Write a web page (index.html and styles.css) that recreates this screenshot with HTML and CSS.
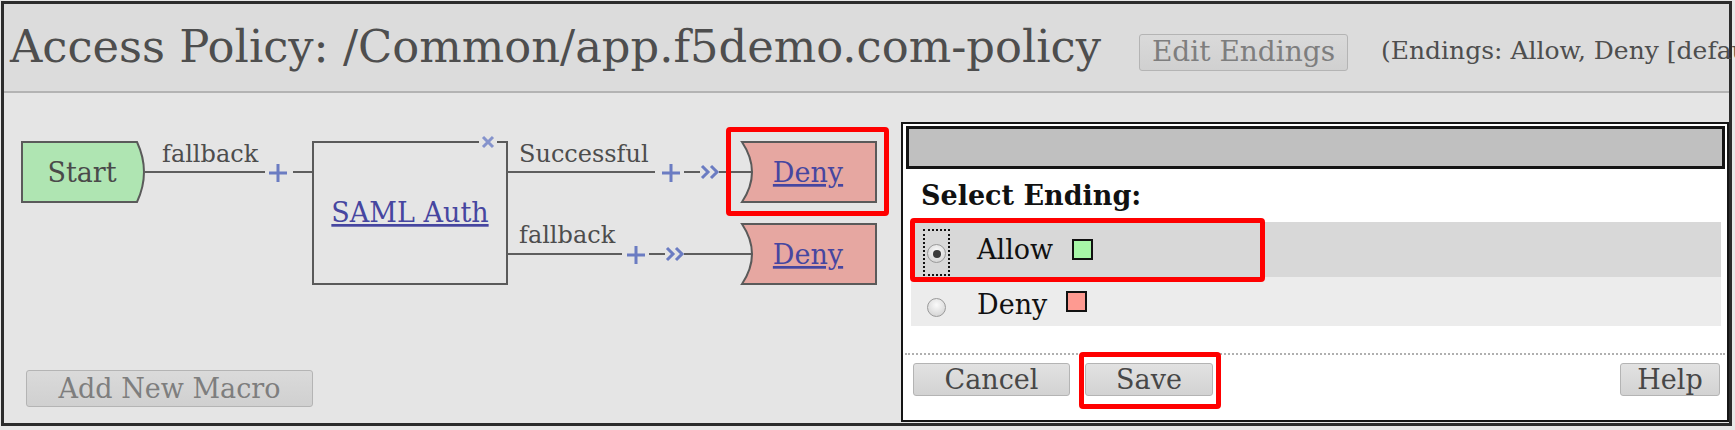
FILE: index.html
```html
<!DOCTYPE html>
<html>
<head>
<meta charset="utf-8">
<title>Access Policy</title>
<link rel="stylesheet" href="styles.css">
</head>
<body>
<div class="frame">
  <header class="head">
    <h1 class="title">Access Policy: /Common/app.f5demo.com-policy</h1>
    <button class="btn btn-dis edit">Edit Endings</button>
    <span class="endings">(Endings: Allow, Deny [default])</span>
  </header>
  <main class="main">
    <svg class="canvas" width="1725" height="260" viewBox="4 93 1725 260">
      <!-- Start node -->
      <path class="node-start" d="M22,142 H137 Q151,172 137,202 H22 Z"/>
      <text class="node-text" x="82" y="182" text-anchor="middle">Start</text>
      <!-- start connector -->
      <path class="edge" d="M144,172 H265 M293,172 H313"/>
      <text class="edge-label" x="162" y="162">fallback</text>
      <path class="plus" d="M269,173 H287 M278,164 V182"/>
      <!-- SAML box -->
      <path class="box" d="M479,142 H313 V284 H507 V142 H497"/>
      <path class="cross" d="M483,137 L493,147 M493,137 L483,147"/>
      <text class="node-text link" x="410" y="222" text-anchor="middle">SAML Auth</text>
      <!-- Successful branch -->
      <path class="edge" d="M507,172 H655 M684,172 H700 M719,172 H752"/>
      <text class="edge-label" x="519" y="162">Successful</text>
      <path class="plus" d="M662,173 H680 M671,164 V182"/>
      <path class="chev" d="M702,166 L708,172 L702,178 M711,166 L717,172 L711,178"/>
      <path class="node-deny" d="M742,142 H876 V202 H742 Q762,172 742,142 Z"/>
      <text class="node-text link" x="808" y="182" text-anchor="middle">Deny</text>
      <!-- fallback branch -->
      <path class="edge" d="M507,254 H622 M649,254 H665 M684,254 H752"/>
      <text class="edge-label" x="519" y="243">fallback</text>
      <path class="plus" d="M627,255 H645 M636,246 V264"/>
      <path class="chev" d="M667,248 L673,254 L667,260 M676,248 L682,254 L676,260"/>
      <path class="node-deny" d="M742,224 H876 V284 H742 Q762,254 742,224 Z"/>
      <text class="node-text link" x="808" y="264" text-anchor="middle">Deny</text>
    </svg>
    <div class="foot">
      <button class="btn btn-dis macro">Add New Macro</button>
    </div>

    <div class="dialog">
      <div class="dlg-bar"></div>
      <div class="dlg-head">Select Ending:</div>
      <div class="opts">
        <div class="opt opt-sel">
          <span class="focus"><span class="radio on"></span></span>
          <span class="opt-label">Allow</span>
          <span class="swatch sw-allow"></span>
        </div>
        <div class="opt opt-alt">
          <span class="radio plain"></span>
          <span class="opt-label">Deny</span>
          <span class="swatch sw-deny"></span>
        </div>
      </div>
      <div class="dlg-sep"></div>
      <div class="dlg-btns">
        <button class="btn dbtn cancel">Cancel</button>
        <button class="btn dbtn save">Save</button>
        <button class="btn dbtn help">Help</button>
      </div>
    </div>
  </main>

  <div class="hl hl-deny"></div>
  <div class="hl hl-allow"></div>
  <div class="hl hl-save"></div>
</div>
</body>
</html>
```

FILE: styles.css
```css
html, body {
  margin: 0;
  padding: 0;
  overflow: hidden;
  background: #e8e8e8;
}

body {
  font-family: "DejaVu Serif", serif;
  width: 1735px;
  height: 430px;
}

.frame {
  position: relative;
  box-sizing: border-box;
  margin: 1px 0 0 1px;
  width: 1731px;
  height: 425px;
  border: 3px solid #2c2c2c;
  background: #e5e5e5;
}

.head {
  box-sizing: border-box;
  height: 89px;
  display: flex;
  align-items: center;
  padding-left: 6px;
  background: #dcdcdc;
  border-bottom: 2px solid #b3b3b3;
  white-space: nowrap;
}

.head > * {
  flex-shrink: 0;
}

.title {
  margin: 0;
  font-size: 44.8px;
  font-weight: normal;
  color: #4e4e4e;
  line-height: 1;
}

.btn {
  font-family: "DejaVu Serif", serif;
  font-size: 27px;
  box-sizing: border-box;
  border: 1px solid #b4b4b4;
  border-radius: 3px;
  background: linear-gradient(#e2e2e2, #d2d2d2);
  color: #474747;
  padding: 0;
  line-height: 1;
}

.btn-dis {
  color: #7e7e7e;
  background: linear-gradient(#dadada, #d0d0d0);
}

.edit {
  margin: 9px 0 0 38px;
  width: 209px;
  height: 37px;
  font-size: 28px;
}

.endings {
  margin: 6px 0 0 33px;
  font-size: 25px;
  color: #4e4e4e;
}

.main {
  position: relative;
  height: 330px;
  background: #e5e5e5;
}

.canvas {
  display: block;
}

.edge {
  fill: none;
  stroke: #5e5e5e;
  stroke-width: 2;
}

.box {
  fill: none;
  stroke: #5a5a5a;
  stroke-width: 2;
}

.node-start {
  fill: #afe5b2;
  stroke: #5a5a5a;
  stroke-width: 2;
}

.node-deny {
  fill: #e6a7a1;
  stroke: #5a5a5a;
  stroke-width: 2;
}

.plus, .chev, .cross {
  fill: none;
  stroke: #6b7cc2;
  stroke-width: 3;
}

.cross {
  stroke: #8593cc;
}

.node-text {
  font-family: "DejaVu Serif", serif;
  font-size: 27px;
  fill: #4a4a4a;
}

.link {
  fill: #4646a0;
  text-decoration: underline;
}

.edge-label {
  font-family: "DejaVu Serif", serif;
  font-size: 24px;
  fill: #4d4d4d;
}

.foot {
  padding: 17px 0 0 22px;
}

.macro {
  width: 287px;
  height: 37px;
}

/* dialog */
.dialog {
  position: absolute;
  left: 897px;
  top: 29px;
  box-sizing: border-box;
  width: 828px;
  height: 300px;
  border: 2px solid #151515;
  background: #fff;
}

.dlg-bar {
  box-sizing: border-box;
  height: 43px;
  margin: 2px 2px 0 3px;
  border: 3px solid #141414;
  background: #c0c0c0;
}

.dlg-head {
  margin: 12px 0 11px 18px;
  font-size: 27px;
  font-weight: bold;
  line-height: 30px;
  color: #111;
}

.opts {
  margin: 0 6px 0 8px;
}

.opt {
  display: flex;
  align-items: center;
}

.opt-sel {
  height: 55px;
  background: #d8d8d8;
}

.opt-alt {
  height: 49px;
  background: #ececec;
}

.focus {
  box-sizing: border-box;
  align-self: flex-end;
  margin: 0 0 1px 12px;
  width: 27px;
  height: 47px;
  border: 2px dotted #111;
  display: flex;
  justify-content: center;
  align-items: center;
  padding-top: 2px;
}

.radio {
  box-sizing: border-box;
  width: 19px;
  height: 19px;
  border-radius: 50%;
  border: 1px solid #9a9a9a;
  background: radial-gradient(circle at 50% 35%, #fafafa, #cdcdcd);
  display: inline-flex;
  align-items: center;
  justify-content: center;
}

.radio.on::after {
  content: "";
  width: 8px;
  height: 8px;
  border-radius: 50%;
  background: #3a3a3a;
}

.radio.plain {
  align-self: flex-end;
  margin: 0 0 9px 16px;
}

.opt-label {
  font-size: 27px;
  color: #111;
  margin-left: 27px;
}

.opt-alt .opt-label {
  margin: 6px 0 0 31px;
}

.swatch {
  box-sizing: border-box;
  width: 21px;
  height: 21px;
  border: 2px solid #111;
  margin-left: 19px;
}

.sw-allow {
  background: #a7f6a7;
}

.sw-deny {
  background: #fe9a91;
}

.dlg-sep {
  margin: 27px 2px 0 2px;
  border-top: 2px dotted #b0b0b0;
}

.dlg-btns {
  display: flex;
  padding: 8px 7px 0 10px;
}

.dbtn {
  height: 33px;
}

.cancel {
  width: 157px;
}

.save {
  width: 128px;
  margin-left: 15px;
}

.help {
  width: 100px;
  margin-left: auto;
}

/* annotation highlights */
.hl {
  position: absolute;
  box-sizing: border-box;
  border: 5px solid #ff0000;
  border-radius: 4px;
}

.hl-deny {
  left: 722px;
  top: 123px;
  width: 163px;
  height: 89px;
}

.hl-allow {
  left: 906px;
  top: 214px;
  width: 355px;
  height: 64px;
}

.hl-save {
  left: 1075px;
  top: 348px;
  width: 142px;
  height: 57px;
}
```
